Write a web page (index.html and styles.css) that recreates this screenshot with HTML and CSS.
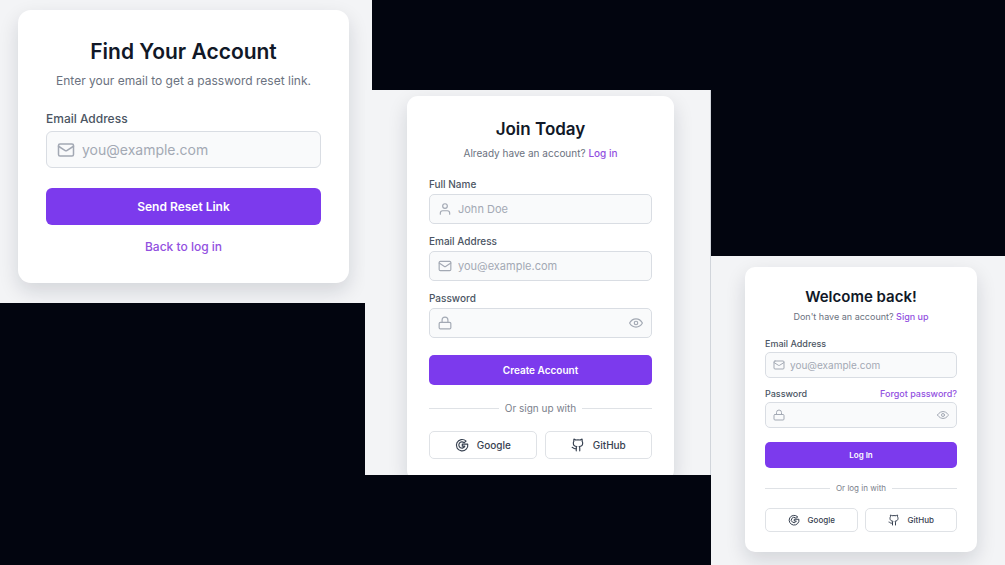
FILE: index.html
```html
<!DOCTYPE html>
<html lang="en">
<head>
    <meta charset="UTF-8">
    <meta name="viewport" content="width=device-width, initial-scale=1.0">
    <title>Account Forms</title>
    <link rel="stylesheet" href="styles.css">
</head>
<body>
    <svg class="sprite" aria-hidden="true">
        <symbol id="mail" viewBox="0 0 24 24">
            <rect x="2" y="4" width="20" height="16" rx="2"/>
            <path d="m22 7-8.97 5.7a1.94 1.94 0 0 1-2.06 0L2 7"/>
        </symbol>
        <symbol id="user" viewBox="0 0 24 24">
            <circle cx="12" cy="7" r="4"/>
            <path d="M20 21v-2a4 4 0 0 0-4-4H8a4 4 0 0 0-4 4v2"/>
        </symbol>
        <symbol id="lock" viewBox="0 0 24 24">
            <rect x="2" y="11" width="20" height="11" rx="2"/>
            <path d="M7 11V7a5 5 0 0 1 10 0v4"/>
        </symbol>
        <symbol id="eye" viewBox="0 0 24 24">
            <path d="M1 12s4-7 11-7 11 7 11 7-4 7-11 7S1 12 1 12z"/>
            <circle cx="12" cy="12" r="3"/>
        </symbol>
        <symbol id="google" viewBox="0 0 24 24">
            <path d="M19 5.300A9.800 9.800 0 1 0 21.800 10.500H12.500V14h4.300A5.300 5.300 0 1 1 15.500 8z"/>
        </symbol>
        <symbol id="github" viewBox="0 0 24 24">
            <path d="M15 22v-4a4.800 4.800 0 0 0-1-3.500c3 0 6-2 6-5.500.080-1.250-.270-2.480-1-3.500.280-1.150.280-2.350 0-3.500 0 0-1 0-3 1.500-2.640-.500-5.360-.500-8 0C6 2 5 2 5 2c-.300 1.150-.300 2.350 0 3.500A5.403 5.403 0 0 0 4 9c0 3.500 3 5.500 6 5.500-.390.490-.680 1.050-.850 1.650-.170.600-.220 1.230-.150 1.850v4"/>
            <path d="M9 18c-4.510 2-5-2-7-2"/>
        </symbol>
    </svg>

    <main class="board">
        <section class="panel panel-reset" id="reset">
            <form class="card">
                <h1>Find Your Account</h1>
                <p class="subtitle">Enter your email to get a password reset link.</p>
                <div class="field">
                    <label for="resetEmail">Email Address</label>
                    <div class="input-wrap">
                        <svg class="icon"><use href="#mail"/></svg>
                        <input type="email" id="resetEmail" placeholder="you@example.com">
                    </div>
                </div>
                <button type="submit" class="primary">Send Reset Link</button>
                <a href="#login" class="back">Back to log in</a>
            </form>
        </section>

        <section class="panel panel-signup" id="signup">
            <form class="card">
                <h1>Join Today</h1>
                <p class="subtitle">Already have an account? <a href="#login">Log in</a></p>
                <div class="field">
                    <label for="fullName">Full Name</label>
                    <div class="input-wrap">
                        <svg class="icon"><use href="#user"/></svg>
                        <input type="text" id="fullName" placeholder="John Doe">
                    </div>
                </div>
                <div class="field">
                    <label for="signupEmail">Email Address</label>
                    <div class="input-wrap">
                        <svg class="icon"><use href="#mail"/></svg>
                        <input type="email" id="signupEmail" placeholder="you@example.com">
                    </div>
                </div>
                <div class="field">
                    <label for="signupPassword">Password</label>
                    <div class="input-wrap">
                        <svg class="icon"><use href="#lock"/></svg>
                        <input type="password" id="signupPassword">
                        <button type="button" class="toggle" aria-label="Show password"><svg class="icon"><use href="#eye"/></svg></button>
                    </div>
                </div>
                <button type="submit" class="primary">Create Account</button>
                <div class="divider">Or sign up with</div>
                <div class="social">
                    <button type="button"><svg class="icon"><use href="#google"/></svg>Google</button>
                    <button type="button"><svg class="icon"><use href="#github"/></svg>GitHub</button>
                </div>
            </form>
        </section>

        <section class="panel panel-login" id="login">
            <form class="card">
                <h1>Welcome back!</h1>
                <p class="subtitle">Don't have an account? <a href="#signup">Sign up</a></p>
                <div class="field">
                    <label for="loginEmail">Email Address</label>
                    <div class="input-wrap">
                        <svg class="icon"><use href="#mail"/></svg>
                        <input type="email" id="loginEmail" placeholder="you@example.com">
                    </div>
                </div>
                <div class="field">
                    <div class="label-row">
                        <label for="loginPassword">Password</label>
                        <a href="#reset">Forgot password?</a>
                    </div>
                    <div class="input-wrap">
                        <svg class="icon"><use href="#lock"/></svg>
                        <input type="password" id="loginPassword">
                        <button type="button" class="toggle" aria-label="Show password"><svg class="icon"><use href="#eye"/></svg></button>
                    </div>
                </div>
                <button type="submit" class="primary">Log In</button>
                <div class="divider">Or log in with</div>
                <div class="social">
                    <button type="button"><svg class="icon"><use href="#google"/></svg>Google</button>
                    <button type="button"><svg class="icon"><use href="#github"/></svg>GitHub</button>
                </div>
            </form>
        </section>
    </main>
</body>
</html>
```
FILE: styles.css
```css
* {
    box-sizing: border-box;
}
body {
    margin: 0;
    background: #02050f;
    font-family: Inter, "Liberation Sans", sans-serif;
    color: #111827;
}
.sprite {
    display: none;
}
.board {
    display: grid;
    grid-template-columns: 365fr 7fr 339fr 294fr;
    grid-template-rows: minmax(0, 90fr) minmax(0, 166fr) minmax(0, 47fr) minmax(0, 172fr) minmax(0, 90fr);
    height: 100vh;
}
.panel {
    background: #f3f4f6;
    overflow: hidden;
}

/* each panel shows the same form at its own size */
.panel-reset {
    grid-area: 1 / 1 / 4 / 3;
    padding: 10px 23px 0 18px;
    --pad: 28px;
    --radius: 13px;
    --title: 21px;
    --title-line: 27px;
    --text: 12px;
    --small: 12px;
    --text-line: 20px;
    --sub-gap: 6px;
    --first-gap: 20px;
    --label-line: 16px;
    --label-gap: 4px;
    --input: 14px;
    --control: 37px;
    --icon: 18px;
    --inset: 10px;
    --icon-gap: 7px;
    --section-gap: 20px;
    --control-radius: 6px;
}
.panel-signup {
    grid-area: 2 / 2 / 5 / 4;
    padding: 6px 36px 0 42px;
    border-right: 1px solid #d1d5db;
    --pad: 22px;
    --radius: 11px;
    --title: 17px;
    --title-line: 22px;
    --text: 10px;
    --small: 10px;
    --text-line: 16px;
    --sub-gap: 5px;
    --first-gap: 17px;
    --label-line: 12px;
    --label-gap: 4px;
    --field-gap: 11px;
    --input: 11px;
    --control: 30px;
    --icon: 14px;
    --inset: 8px;
    --icon-gap: 6px;
    --section-gap: 17px;
    --divider-gap: 17px;
    --control-radius: 5px;
    --social: 28px;
    --social-gap: 8px;
}
.panel-login {
    grid-area: 3 / 4 / 6 / 5;
    padding: 11px 28px 0 34px;
    --pad: 20px;
    --radius: 10px;
    --title: 15px;
    --title-line: 19px;
    --text: 9px;
    --small: 8px;
    --text-line: 14px;
    --sub-gap: 4px;
    --first-gap: 15px;
    --label-line: 10px;
    --label-gap: 3px;
    --field-gap: 11px;
    --input: 10px;
    --control: 26px;
    --icon: 12px;
    --inset: 7px;
    --icon-gap: 5px;
    --section-gap: 14px;
    --divider-gap: 14px;
    --control-radius: 5px;
    --social: 24px;
    --social-gap: 7px;
}
.card {
    padding: var(--pad);
    background: white;
    border-radius: var(--radius);
    box-shadow: 0 8px 20px rgba(17, 24, 39, 0.14);
}
h1 {
    margin: 0;
    font-size: var(--title);
    line-height: var(--title-line);
    font-weight: 600;
    text-align: center;
}
.subtitle {
    margin: var(--sub-gap) 0 var(--first-gap);
    font-size: var(--text);
    line-height: var(--text-line);
    color: #6b7280;
    text-align: center;
}
a {
    color: #9250df;
    font-weight: 500;
    text-decoration: none;
}
a:hover {
    text-decoration: underline;
}
.field + .field {
    margin-top: var(--field-gap);
}
label,
.label-row {
    display: block;
    font-size: var(--text);
    line-height: var(--label-line);
    font-weight: 500;
    color: #4b5563;
}
.label-row {
    display: flex;
    justify-content: space-between;
}
.input-wrap {
    display: flex;
    align-items: center;
    gap: var(--icon-gap);
    height: var(--control);
    margin-top: var(--label-gap);
    padding: 0 var(--inset);
    background: #f9fafb;
    border: 1px solid #d9dde3;
    border-radius: var(--control-radius);
    color: #a3a9b4;
}
.icon {
    flex: none;
    width: var(--icon);
    height: var(--icon);
    fill: none;
    stroke: currentColor;
    stroke-width: 2;
    stroke-linecap: round;
    stroke-linejoin: round;
}
input {
    flex: 1;
    min-width: 0;
    padding: 0;
    border: none;
    outline: none;
    background: transparent;
    font: inherit;
    font-size: var(--input);
    color: #111827;
}
input::placeholder {
    color: #a3a9b4;
}
button {
    font: inherit;
    cursor: pointer;
}
.toggle {
    display: flex;
    padding: 0;
    border: none;
    background: none;
    color: inherit;
}
.primary {
    display: block;
    width: 100%;
    height: var(--control);
    margin-top: var(--section-gap);
    padding: 0;
    border: none;
    border-radius: var(--control-radius);
    background: #7c3aed;
    color: white;
    font-size: var(--small);
    font-weight: 600;
}
.primary:hover {
    background: #6d28d9;
}
.back {
    display: block;
    margin-top: 14px;
    font-size: var(--text);
    line-height: var(--label-line);
    text-align: center;
}
.divider {
    display: flex;
    align-items: center;
    gap: 6px;
    margin: var(--divider-gap) 0;
    font-size: var(--small);
    line-height: 12px;
    color: #7b818c;
}
.divider::before,
.divider::after {
    content: "";
    flex: 1;
    height: 1px;
    background: #dfe2e6;
}
.social {
    display: grid;
    grid-template-columns: 1fr 1fr;
    gap: var(--social-gap);
}
.social button {
    display: flex;
    align-items: center;
    justify-content: center;
    gap: 8px;
    height: var(--social);
    padding: 0;
    background: white;
    border: 1px solid #dfe2e6;
    border-radius: var(--control-radius);
    color: #374151;
    font-size: var(--small);
    font-weight: 500;
}
```
